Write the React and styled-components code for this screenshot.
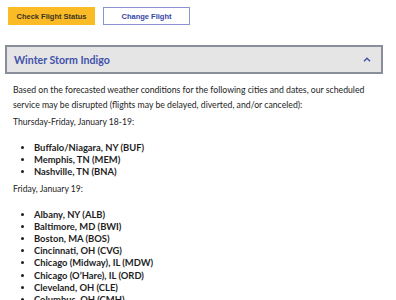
import React from 'react';
import styled, { createGlobalStyle } from 'styled-components';

const GlobalStyle = createGlobalStyle`
  html, body { margin: 0; padding: 0; background: #fff; }
`;

const days = [
  {
    label: 'Thursday-Friday, January 18-19:',
    cities: ['Buffalo/Niagara, NY (BUF)', 'Memphis, TN (MEM)', 'Nashville, TN (BNA)'],
  },
  {
    label: 'Friday, January 19:',
    cities: [
      'Albany, NY (ALB)',
      'Baltimore, MD (BWI)',
      'Boston, MA (BOS)',
      'Cincinnati, OH (CVG)',
      'Chicago (Midway), IL (MDW)',
      'Chicago (O\u2019Hare), IL (ORD)',
      'Cleveland, OH (CLE)',
      'Columbus, OH (CMH)',
    ],
  },
];

function App() {
  return (
    <>
      <GlobalStyle />
      <Page>
        <ButtonRow>
          <ActionButton $primary>Check Flight Status</ActionButton>
          <ActionButton>Change Flight</ActionButton>
        </ButtonRow>
        <AccordionHeader>
          <Title>Winter Storm Indigo</Title>
          <svg width="8" height="5" viewBox="0 0 8 5">
            <path d="M1 4.2 L4 1.3 L7 4.2" fill="none" stroke="#3d4fa8" strokeWidth="1.4" />
          </svg>
        </AccordionHeader>
        <Body>
          <Intro>
            Based on the forecasted weather conditions for the following cities and dates, our scheduled
            service may be disrupted (flights may be delayed, diverted, and/or canceled):
          </Intro>
          {days.map((d) => (
            <section key={d.label}>
              <DayLabel>{d.label}</DayLabel>
              <CityList>
                {d.cities.map((c) => (
                  <City key={c}>{c}</City>
                ))}
              </CityList>
            </section>
          ))}
        </Body>
      </Page>
    </>
  );
}

export default App;

const Page = styled.div`
  width: 396px;
  height: 300px;
  overflow: hidden;
`;

const ButtonRow = styled.div`
  display: flex;
  gap: 8px;
  padding: 7px 0 0 8px;
`;

const ActionButton = styled.button`
  width: 87px;
  height: 18px;
  box-sizing: border-box;
  padding: 0;
  font-family: 'Liberation Sans', Arial, sans-serif;
  font-size: 7.5px;
  font-weight: 700;
  background: ${(p) => (p.$primary ? '#fbbb27' : '#fff')};
  color: ${(p) => (p.$primary ? '#3a3320' : '#3446a8')};
  border: 1px solid ${(p) => (p.$primary ? '#fbbb27' : '#8c92d2')};
`;

const AccordionHeader = styled.div`
  margin: 20px 13px 0 5px;
  height: 29px;
  box-sizing: border-box;
  background: #e5e5e5;
  border: 2px solid #8a8d9a;
  display: flex;
  align-items: center;
  justify-content: space-between;
  padding: 0 10px 0 7px;
`;

const Title = styled.span`
  font-family: Lato, 'Noto Sans', sans-serif;
  font-size: 10.6px;
  font-weight: 700;
  color: #4152ab;
`;

const Body = styled.div`
  padding: 8px 0 0 13px;
  font-family: Lato, 'Noto Sans', sans-serif;
  color: #1c1c1c;
`;

const Intro = styled.p`
  margin: 0;
  font-size: 8.7px;
  line-height: 15px;
  width: 375px;
`;

const DayLabel = styled.p`
  margin: 3px 0 13px;
  font-size: 8.6px;
  line-height: 14px;
`;

const CityList = styled.ul`
  margin: 0;
  padding-left: 21px;
  list-style: disc;
`;

const City = styled.li`
  font-size: 9.4px;
  font-weight: 700;
  line-height: 12.2px;
  color: #1e1e1e;
`;
